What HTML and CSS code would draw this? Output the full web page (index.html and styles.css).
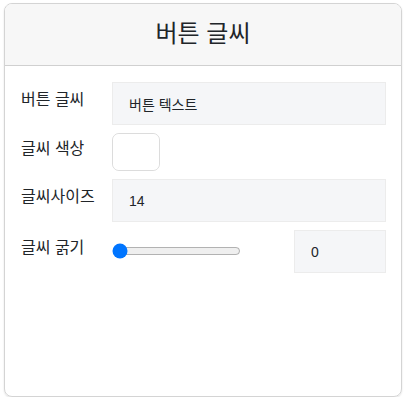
FILE: index.html
```html
<!DOCTYPE html>
<html lang="ko">
<head>
<meta charset="utf-8">
<link rel="stylesheet" href="styles.css">
</head>
<body>
<div class="card">
  <div class="card-header">버튼 글씨</div>
  <div class="card-body">
    <div class="row">
      <label class="label">버튼 글씨</label>
      <input class="field" type="text" value="버튼 텍스트">
    </div>
    <div class="row">
      <label class="label">글씨 색상</label>
      <input class="color" type="color" value="#ffffff">
    </div>
    <div class="row">
      <label class="label">글씨사이즈</label>
      <input class="field" type="text" value="14">
    </div>
    <div class="row">
      <label class="label">글씨 굵기</label>
      <div class="weight">
        <input class="range" type="range" min="0" max="900" value="0">
        <input class="field num" type="text" value="0">
      </div>
    </div>
  </div>
</div>
</body>
</html>
```
FILE: styles.css
```css
html, body {
  margin: 0;
  padding: 0;
  background: #fff;
}
body {
  padding: 3px 3px 0 4px;
  font-family: "Liberation Sans", "Noto Sans CJK KR", sans-serif;
  color: #212529;
}
.card {
  box-sizing: border-box;
  width: 398px;
  height: 394px;
  border: 1px solid #d4d4d4;
  border-radius: 8px;
  box-shadow: 0 1px 2px rgba(0,0,0,0.12);
  overflow: hidden;
  display: flex;
  flex-direction: column;
}
.card-header {
  height: 62px;
  flex: none;
  box-sizing: border-box;
  background: #f7f7f7;
  border-bottom: 1px solid #d0d0d0;
  display: flex;
  align-items: center;
  justify-content: center;
  font-size: 24px;
  padding-bottom: 6px;
}
.card-body {
  padding: 16px 15px 16px 16px;
  display: flex;
  flex-direction: column;
  gap: 8px;
}
.row {
  display: flex;
  align-items: center;
}
.label {
  width: 91px;
  flex: none;
  font-size: 16px;
  line-height: 24px;
  margin-top: -7px;
}
.field {
  flex: 1;
  min-width: 0;
  box-sizing: border-box;
  height: 43px;
  margin: 0;
  padding: 0 16px;
  border: 1px solid #ececec;
  background: #f5f6f8;
  font-family: "Liberation Sans", "Noto Sans CJK KR", sans-serif;
  font-size: 14px;
  color: #212529;
  outline: none;
}
.color {
  box-sizing: border-box;
  width: 48px;
  height: 38px;
  margin: 0;
  padding: 0;
  border: 1px solid #dcdcdc;
  border-radius: 7px;
  background: #fff;
}
.color::-webkit-color-swatch-wrapper {
  padding: 0;
}
.color::-webkit-color-swatch {
  border: none;
  border-radius: 6px;
}
.weight {
  flex: 1;
  display: flex;
  align-items: center;
  justify-content: space-between;
}
.range {
  margin: 0;
  width: 129px;
  margin-top: -1px;
}
.num {
  flex: none;
  width: 92px;
}
```
